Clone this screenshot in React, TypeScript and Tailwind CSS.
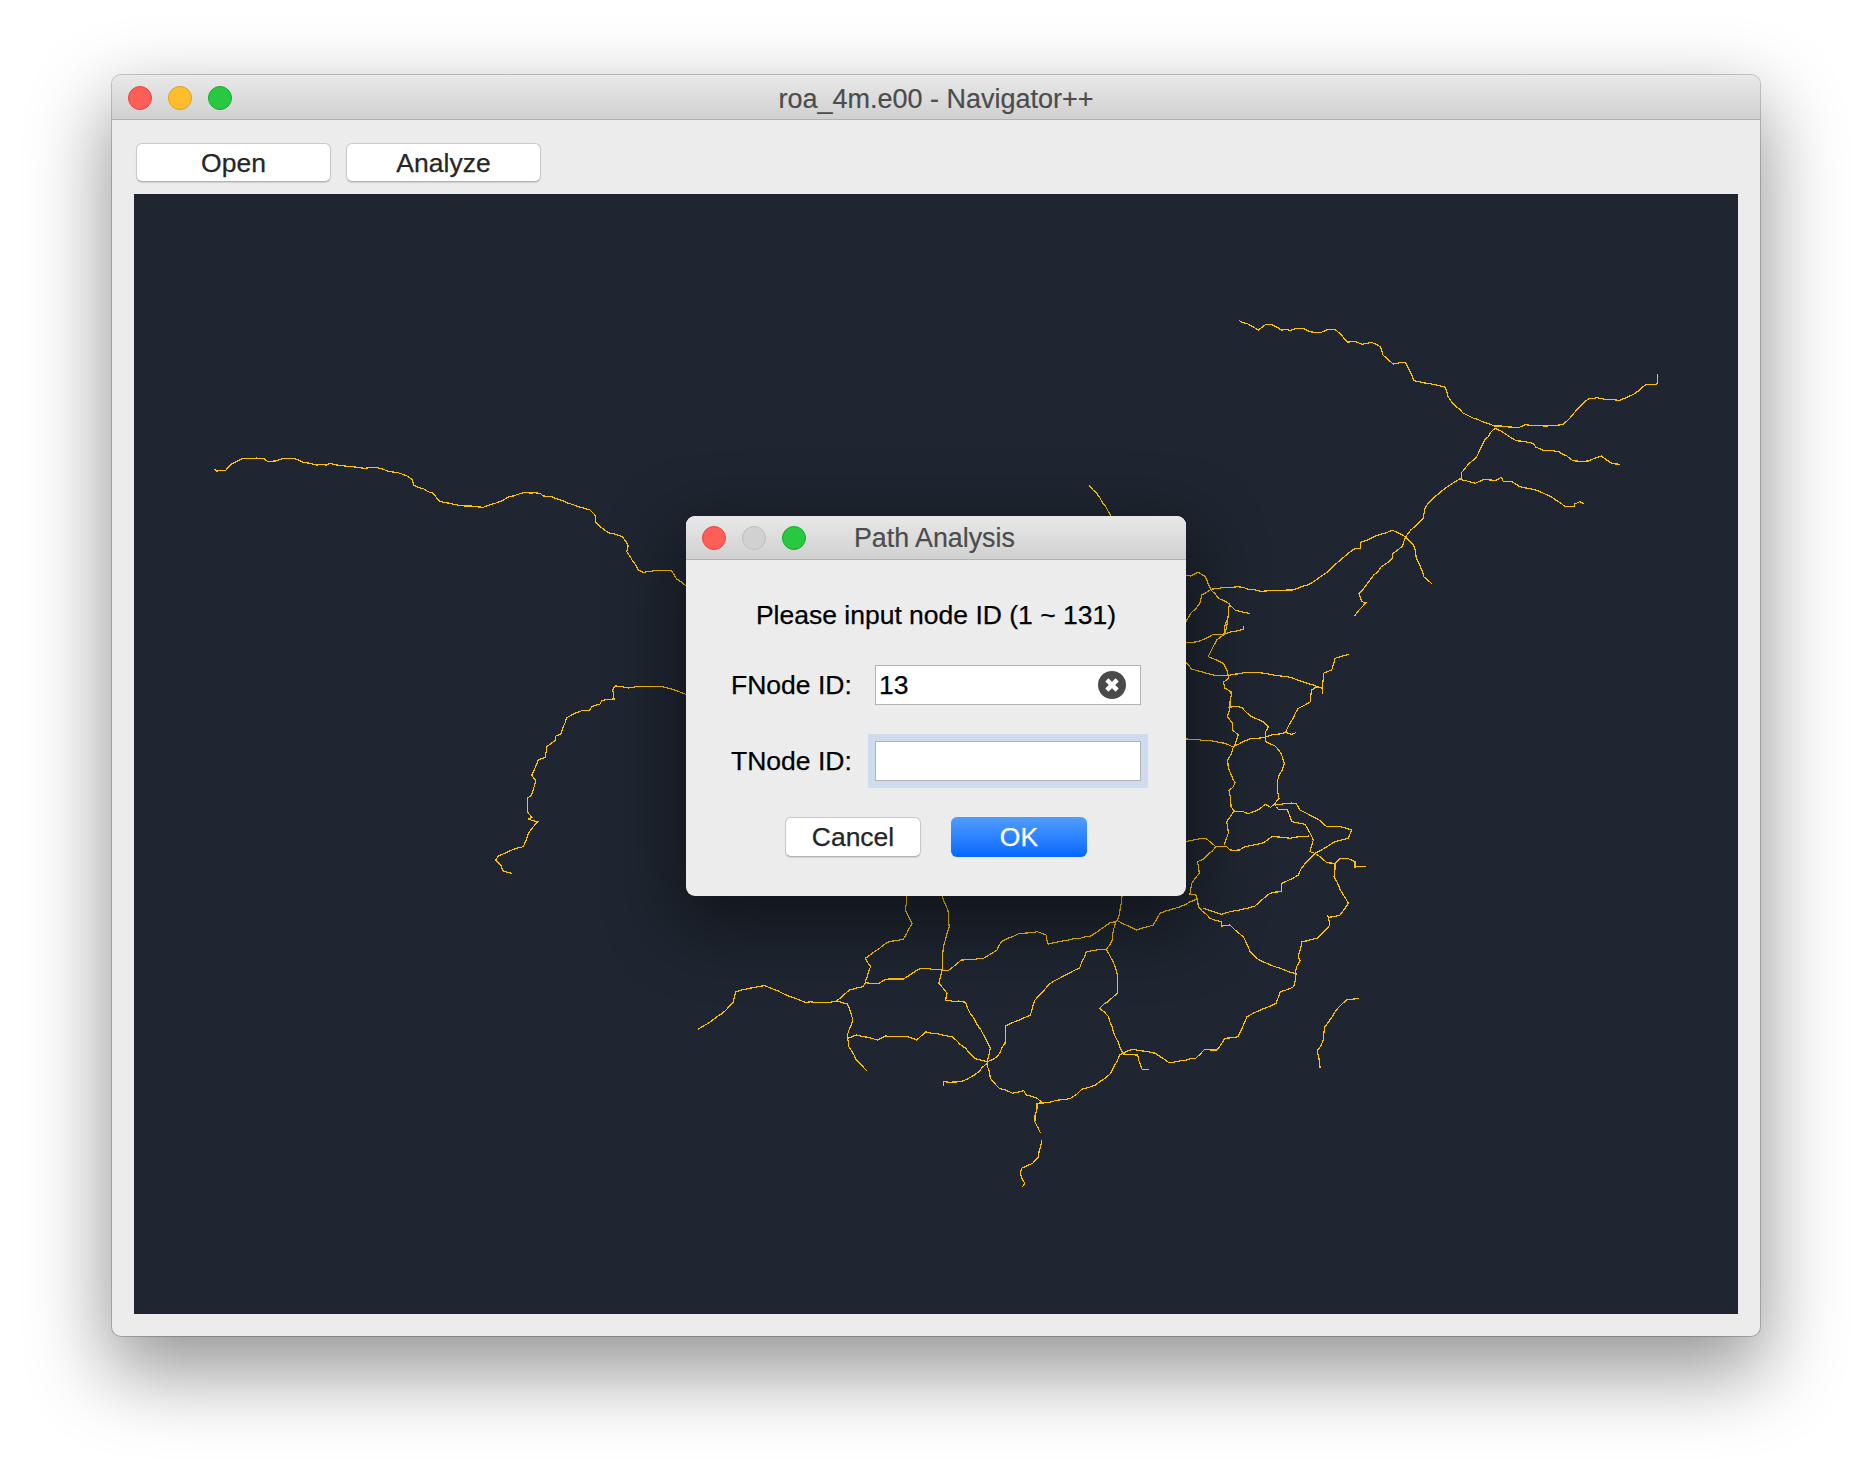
import React from "react";

type Layer = { ox: number; oy: number; sx: number; sy: number; lines: string[] };

const layers: Layer[] = [
  {
    ox: 1100, oy: 300, sx: 2.703, sy: 3,
    lines: [
      "375,61 400,72 428,90 447,74 463,73 490,90 515,91 530,85 548,85 570,96 598,97 618,88 635,88 650,102 668,126 690,125 710,133 733,127 758,140 765,165 793,192 826,187 838,215 848,242 905,254 933,262 940,288 958,316 982,340 1020,358 1065,378 1105,381 1133,382 1150,374 1190,377 1220,377 1252,373 1272,352 1300,316 1320,297 1345,293 1375,299 1405,301 1442,283 1475,254 1505,253 1507,223",
      "1068,385 1100,405 1125,422 1170,430 1178,441 1200,452 1240,455 1262,468 1278,482 1320,483 1355,468 1385,491 1405,493",
      "1068,385 1040,420 1020,467 990,500 976,520 976,535 968,540 935,563 900,595 880,620 873,655 840,690 826,711 818,738 790,762 790,775 760,800 730,840 700,880 708,905 718,908 700,930 688,948",
      "970,538 1015,550 1040,538 1070,541 1085,532 1090,545 1115,546 1135,560 1170,568 1220,590 1255,618 1282,620 1283,612 1297,605 1310,613",
      "826,711 848,735 855,775 866,800 875,830 897,851",
      "826,711 790,691 770,700 740,710 705,727 705,745 690,745 650,780 610,820 560,855 520,870 435,874 370,860 300,868",
      "300,868 285,830 265,817 245,828 232,826",
      "300,868 275,885 270,910 245,940 232,965",
      "300,870 320,895 345,908 365,930 405,940",
      "350,910 345,965 338,1000",
    ],
  },
  {
    ox: 1180, oy: 620, sx: 3, sy: 3,
    lines: [
      "18,67 55,65 100,43 135,42 190,28 192,17",
      "140,0 133,25 135,42 110,60 85,110 130,130 143,155 145,175 130,187 135,205 153,215 150,260 142,290 158,310 158,330 175,345 165,375 158,385 155,400 143,420 145,445 160,480 165,488 160,500 147,512 152,535 153,560 163,573 140,605 145,640 132,675",
      "18,127 35,147 100,165 145,167 195,157 255,160 320,170 400,195 428,205 430,160 455,150 465,115 490,107 508,103",
      "428,205 428,223",
      "428,205 410,200 395,210 392,245 355,265 330,310 317,337 300,342 280,343 255,352 215,355 175,373 158,380 135,370 90,362 18,357",
      "317,337 335,343 347,338",
      "145,263 165,259 185,262 215,290 250,305 265,320 257,335 257,365 285,378 305,405 313,430 293,480 293,515 297,535 285,550 272,562 255,553 238,568 205,581 190,575 163,574",
      "285,555 320,550 348,550 360,570 415,598 440,620 480,620 515,630 505,655 465,665 405,700",
      "290,560 295,568 322,570 335,605 375,613 388,635 400,660 390,695 405,700 372,735 355,765 305,790 305,815 270,820 225,858 150,875 125,883 70,865",
      "388,648 330,655 275,650 250,668 195,680 178,690 150,690 140,680 108,680 70,718 52,725 58,760 35,790 30,822 48,825",
      "18,665 78,655 108,680",
      "405,700 440,728 465,730 462,770 490,825 505,850 480,885 445,892 442,885",
      "445,892 450,915 412,955 365,965 355,1010 360,1022 350,1040 345,1060",
      "465,730 480,716 505,716 525,725 525,741 557,739",
      "48,825 55,860 90,895 125,905 125,918 150,915 190,950 210,995 230,1015 260,1030 300,1045 345,1060",
      "538,1135 500,1140 478,1160 460,1185 435,1220 430,1260 412,1292 420,1345",
    ],
  },
  {
    ox: 680, oy: 880, sx: 2.24, sy: 3,
    lines: [
      "507,47 505,90 520,130 500,178 465,187 415,235 427,260 415,305",
      "587,47 600,90 603,140 590,200 587,270",
      "40,448 75,418 95,400 120,365 125,335 155,325 190,317 230,340 280,367 335,367 350,363 375,372 387,420 375,465 378,500 395,540 418,572",
      "350,363 380,330 410,320 415,308 445,310 460,298 500,297 540,265 587,270 600,272 630,240 680,235 710,210 720,185 760,160 800,155 820,165 825,192 870,180 920,168 965,127 978,125",
      "990,47 985,100 975,130 968,180 955,208",
      "980,122 1022,150 1060,135 1075,100 1130,75 1157,58",
      "955,208 910,215 895,265 850,295 825,315 795,360 785,405 730,437 728,490 710,530 688,545",
      "955,208 970,245 980,285 980,340 940,385 960,410 975,470 993,520 985,525 965,580 930,615 900,628 875,655 815,668 800,670 795,725 808,760",
      "993,520 1015,508 1065,520 1095,548 1155,535 1175,508 1203,510 1220,475 1250,470 1270,410 1300,390 1335,370 1345,335 1375,320 1380,280",
      "993,522 1025,525 1035,568 1050,568",
      "587,270 580,310 598,340 595,360 640,367 650,400 680,465 695,505 688,545 695,595 715,625 745,640 770,632 775,645 800,655 815,672",
      "688,545 660,535 640,505 610,470 550,455 530,480 510,470 460,468 442,480 395,465 375,475",
      "688,550 660,585 630,605 590,605 590,617",
      "810,780 803,830 790,850 765,865 762,880 772,910 767,922",
    ],
  },
  {
    ox: 190, oy: 430, sx: 3, sy: 3,
    lines: [
      "73,118 80,123 107,121 128,100 160,85 220,85 232,94 258,93 285,85 310,85 340,97 380,105 410,105 420,100 440,105 490,110 525,115 560,113 590,122 620,127 650,137 668,150 670,165 730,190 748,213 775,219 825,228 880,232 900,224 935,213 955,201 1005,187 1050,190 1060,198 1085,200 1130,218 1200,240 1215,255 1217,277 1255,308 1297,320 1315,347 1310,365 1345,420 1360,427 1400,421 1445,422 1460,447 1487,467",
      "1487,793 1430,773 1410,769 1340,770 1315,774 1275,768 1268,780 1272,807 1235,812 1230,822 1205,830 1200,840 1175,842 1130,863 1113,912 1098,918 1095,932 1070,950 1065,982 1045,990 1025,1035 1037,1052 1025,1095 1012,1105 1012,1145 1025,1162 1015,1167 1043,1175 1015,1210 1000,1250 960,1262 925,1278 917,1290 932,1305 938,1322 965,1330",
    ],
  },
  {
    ox: 0, oy: 0, sx: 1, sy: 1,
    lines: ["1089,485 1100,498 1111,516"],
  },
];

// Turns traced points into page coordinates and adds the small wobble of the map data.
let seed = 7;
const rand = () => {
  seed = (seed * 16807) % 2147483647;
  return seed / 2147483647 - 0.5;
};
const roadPaths: string[] = layers.flatMap((l) =>
  l.lines.map((line) => {
    const pts = line.split(" ").map((p) => {
      const [x, y] = p.split(",").map(Number);
      return [l.ox + x / l.sx, l.oy + y / l.sy];
    });
    let d = `M${pts[0][0].toFixed(1)} ${pts[0][1].toFixed(1)}`;
    for (let i = 1; i < pts.length; i++) {
      const [ax, ay] = pts[i - 1];
      const [bx, by] = pts[i];
      const n = Math.max(1, Math.round(Math.hypot(bx - ax, by - ay) / 6));
      for (let k = 1; k <= n; k++) {
        const t = k / n;
        const j = k === n ? 0 : 1.1;
        const x = ax + (bx - ax) * t + rand() * j;
        const y = ay + (by - ay) * t + rand() * j;
        d += `L${x.toFixed(1)} ${y.toFixed(1)}`;
      }
    }
    return d;
  })
);

const font = "font-['Liberation_Sans',Arial,sans-serif]";

function Light({ color, border }: { color: string; border: string }) {
  return <span className={`block h-6 w-6 rounded-full border ${color} ${border}`} />;
}

function ToolButton({ label }: { label: string }) {
  return (
    <button className="h-[39px] w-[195px] rounded-[6px] border border-[#c9c9c9] border-b-[#b4b4b4] bg-white text-[26.5px] leading-[36px] text-[#262626] shadow-[0_1px_1px_rgba(0,0,0,0.12)] [-webkit-text-stroke:0.25px_#262626]">
      {label}
    </button>
  );
}

export default function App() {
  return (
    <div className={`h-[1484px] w-[1872px] overflow-hidden bg-white pl-[112px] pt-[75px] ${font}`}>
      <div className="relative flex h-[1261px] w-[1648px] flex-col rounded-[9px] bg-[#ececec] shadow-[0_0_0_1px_rgba(0,0,0,0.2),0_32px_80px_4px_rgba(0,0,0,0.42)]">
        <div className="relative flex h-[45px] shrink-0 items-center gap-4 rounded-t-[9px] border-b border-[#b1b1b1] bg-gradient-to-b from-[#e9e9e9] to-[#d0d0d0] pl-4 pt-[2px]">
          <Light color="bg-[#ff5f57]" border="border-[#e2463f]" />
          <Light color="bg-[#ffbd2e]" border="border-[#e1a116]" />
          <Light color="bg-[#28c940]" border="border-[#12ac28]" />
          <span className="absolute inset-x-0 top-0 text-center text-[27px] leading-[48px] text-[#4c4c4c] [-webkit-text-stroke:0.2px_#4c4c4c]">
            roa_4m.e00 - Navigator++
          </span>
        </div>

        <div className="flex h-[74px] shrink-0 items-start gap-[15px] pl-[24px] pt-[23px]">
          <ToolButton label="Open" />
          <ToolButton label="Analyze" />
        </div>

        <div className="mx-[22px] h-[1120px] w-[1604px] bg-[#1f2631]">
          <svg
            viewBox="134 194 1604 1120"
            className="block h-full w-full"
            fill="none"
            stroke="#ffc000"
            strokeWidth="1.2"
            shapeRendering="crispEdges"
          >
            {roadPaths.map((d, i) => (
              <path key={i} d={d} />
            ))}
          </svg>
        </div>

        <div className="absolute left-[574px] top-[441px] h-[380px] w-[500px] rounded-[9px] bg-[#ececec] shadow-[0_22px_70px_10px_rgba(0,0,0,0.45)]">
          <div className="relative flex h-[44px] items-center gap-4 rounded-t-[9px] border-b border-[#b1b1b1] bg-gradient-to-b from-[#e9e9e9] to-[#d0d0d0] pl-4">
            <Light color="bg-[#ff5f57]" border="border-[#e2463f]" />
            <Light color="bg-[#d1d1d1]" border="border-[#bdbdbd]" />
            <Light color="bg-[#28c940]" border="border-[#12ac28]" />
            <span className="absolute left-[168px] top-0 text-[26.8px] leading-[44px] text-[#4c4c4c] [-webkit-text-stroke:0.2px_#4c4c4c]">Path Analysis</span>
          </div>

          <p className="pt-[40px] text-center text-[26.5px] leading-[30px] text-black [-webkit-text-stroke:0.25px_#000]">
            Please input node ID (1 ~ 131)
          </p>

          <div className="mt-[35px] flex items-center pl-[45px]">
            <span className="w-[144px] text-[26.5px] leading-[40px] text-black [-webkit-text-stroke:0.25px_#000]">FNode ID:</span>
            <div className="relative h-10 w-[266px] border border-[#b3b3b3] bg-white pl-[3px] text-[26.5px] leading-[38px] text-black [-webkit-text-stroke:0.25px_#000]">
              13
              <span className="absolute left-[222px] top-[5px] flex h-7 w-7 items-center justify-center rounded-full bg-[#4a4a4a]">
                <svg viewBox="0 0 14 14" className="h-[18px] w-[18px]" stroke="#ffffff" strokeWidth="3.4">
                  <path d="M3 3 L11 11 M11 3 L3 11" />
                </svg>
              </span>
            </div>
          </div>

          <div className="mt-9 flex items-center pl-[45px]">
            <span className="w-[144px] text-[26.5px] leading-[40px] text-black [-webkit-text-stroke:0.25px_#000]">TNode ID:</span>
            <div className="h-10 w-[266px] border border-[#b3b3b3] bg-white shadow-[0_0_0_7px_#cddcef]" />
          </div>

          <div className="mt-9 flex gap-[30px] pl-[99px]">
            <button className="h-10 w-[136px] rounded-[6px] border border-[#c9c9c9] border-b-[#b4b4b4] bg-white text-[26.5px] leading-[36px] text-[#262626] shadow-[0_1px_1px_rgba(0,0,0,0.12)] [-webkit-text-stroke:0.25px_#262626]">
              Cancel
            </button>
            <button className="h-10 w-[136px] rounded-[6px] bg-gradient-to-b from-[#4f9dfd] to-[#0067fe] text-[26.5px] leading-[38px] text-white [-webkit-text-stroke:0.25px_#fff]">
              OK
            </button>
          </div>
        </div>
      </div>
    </div>
  );
}
